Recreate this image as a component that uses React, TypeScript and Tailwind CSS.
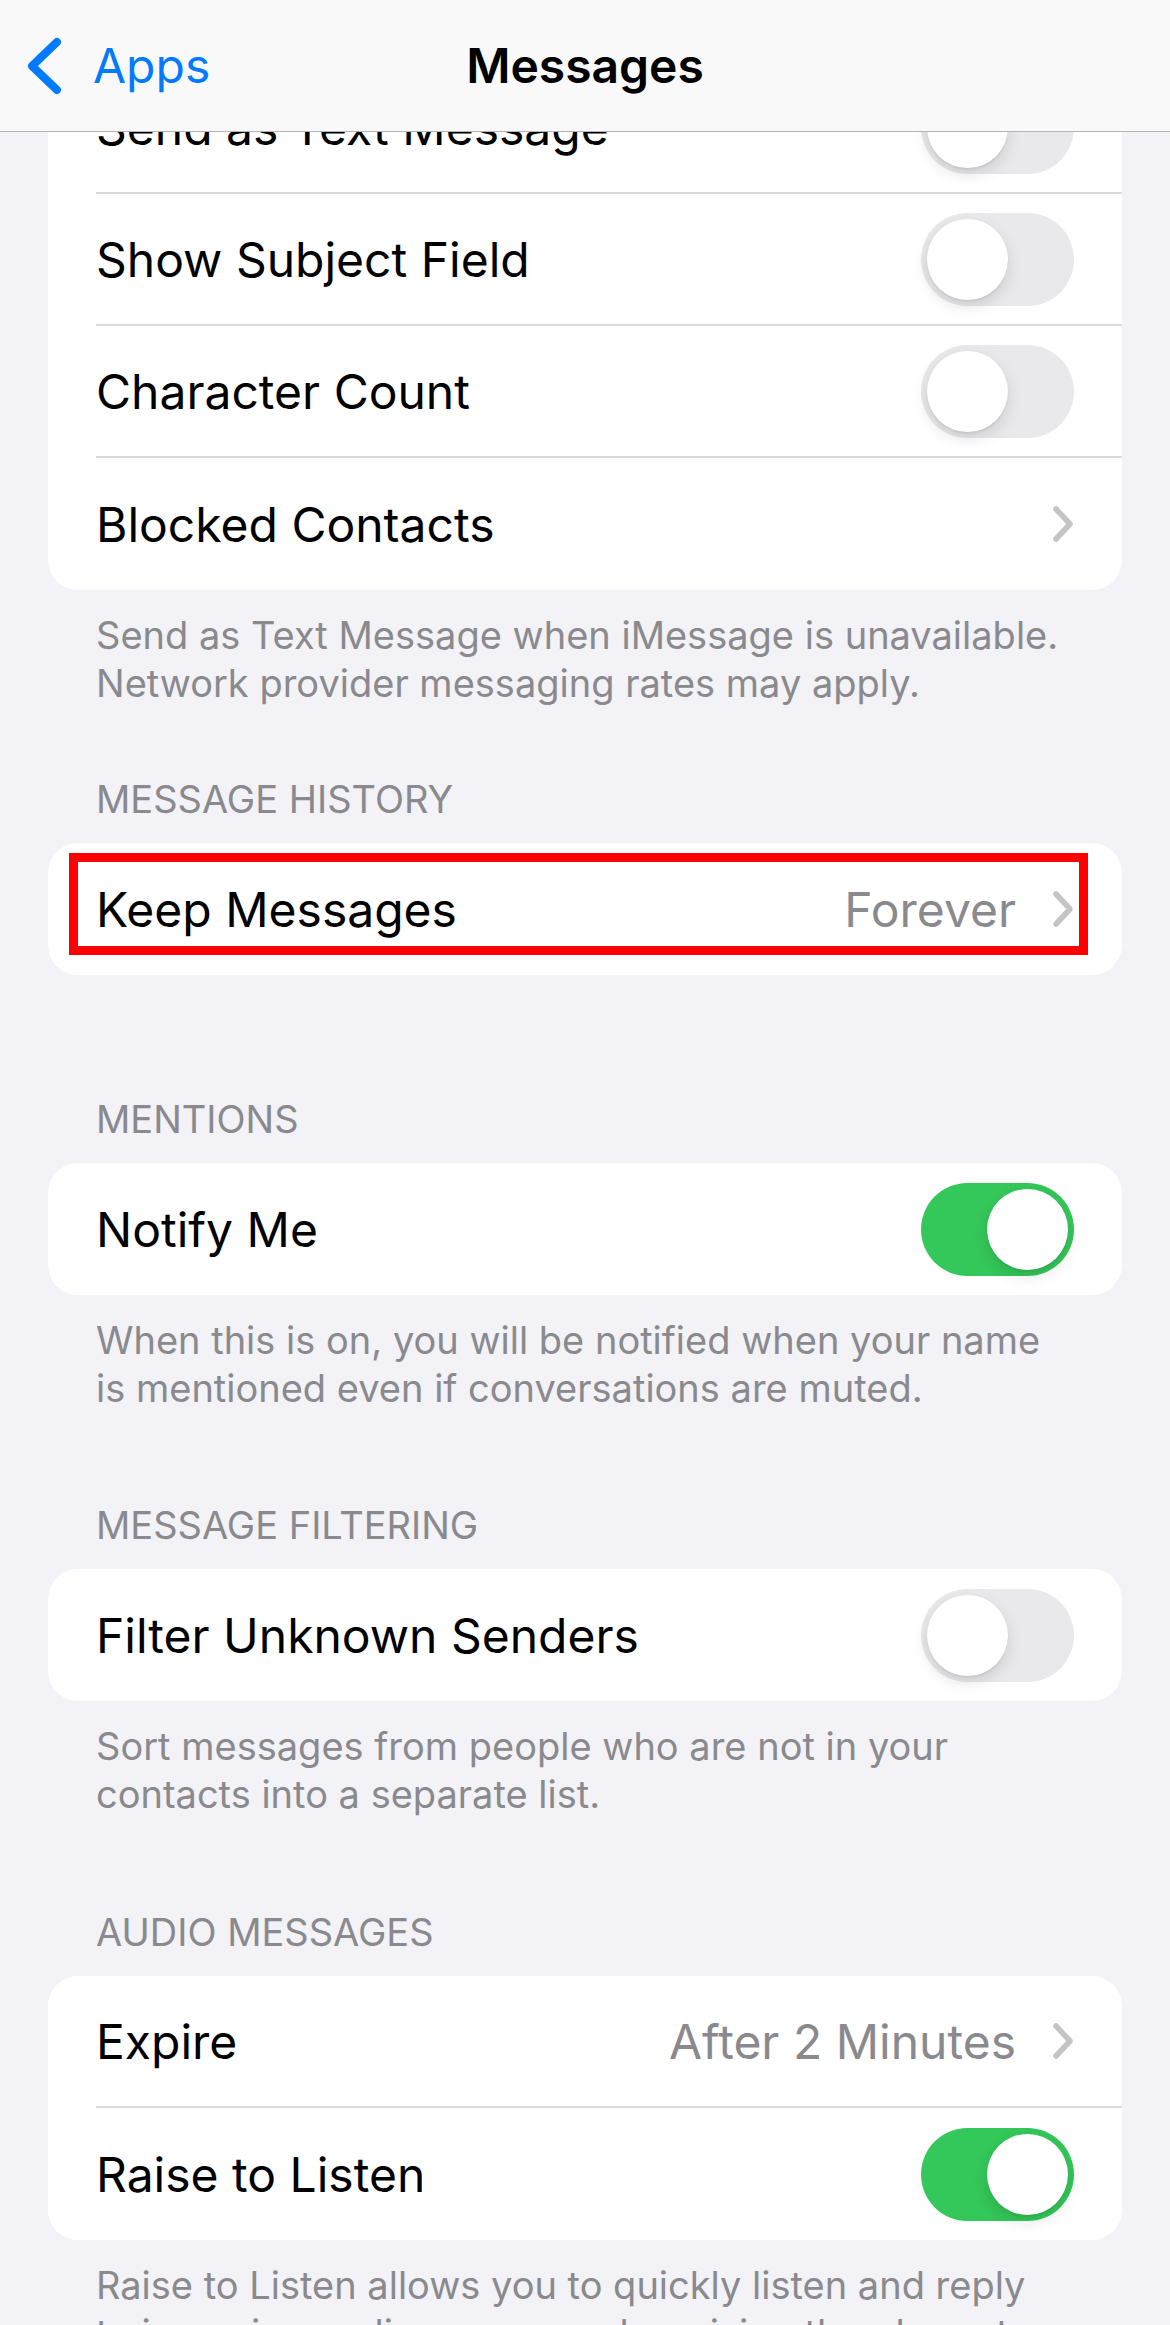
import React from 'react';

type Item = {
  label: string;
  toggle?: boolean;
  value?: string;
  chevron?: boolean;
};

function Toggle({ on }: { on: boolean }) {
  return (
    <div
      className={`flex h-[93px] w-[153px] shrink-0 items-center rounded-full p-[6px] ${
        on ? 'justify-end bg-[#34c759]' : 'justify-start bg-[#e9e9eb]'
      }`}
    >
      <div className="h-[81px] w-[81px] rounded-full bg-white shadow-[0_6px_16px_rgba(0,0,0,0.12),0_2px_2px_rgba(0,0,0,0.06)]" />
    </div>
  );
}

function Chevron() {
  return (
    <svg width="22" height="38" viewBox="0 0 22 38" className="shrink-0">
      <polyline
        points="4,4 18,19 4,34"
        fill="none"
        stroke="#c4c4c7"
        strokeWidth="5.5"
        strokeLinecap="round"
        strokeLinejoin="round"
      />
    </svg>
  );
}

function Row({ item, last }: { item: Item; last: boolean }) {
  return (
    <div className="flex h-[132px] pl-[48px]">
      <div
        className={`flex flex-1 items-center justify-between pr-[48px] ${
          last ? '' : 'border-b-2 border-[#dadade]'
        }`}
      >
        <span className="pt-[2px] text-[48px] leading-none text-black">{item.label}</span>
        {item.toggle !== undefined && <Toggle on={item.toggle} />}
        {item.chevron && (
          <div className="flex items-center gap-[36px]">
            {item.value && (
              <span className="pt-[2px] text-[48px] leading-none text-[#8a8a8e]">{item.value}</span>
            )}
            <Chevron />
          </div>
        )}
      </div>
    </div>
  );
}

function Card({ items, children }: { items: Item[]; children?: React.ReactNode }) {
  return (
    <div className="relative overflow-hidden rounded-[30px] bg-white">
      {items.map((item, i) => (
        <Row key={item.label} item={item} last={i === items.length - 1} />
      ))}
      {children}
    </div>
  );
}

function Header({ title, className }: { title: string; className: string }) {
  return (
    <div className={`mb-[20px] pl-[48px] text-[38px] leading-[48px] text-[#8a8a8e] ${className}`}>{title}</div>
  );
}

function Footer({ lines }: { lines: string[] }) {
  return (
    <div className="pl-[48px] pt-[21px] text-[38px] leading-[48px] text-[#8a8a8e]">
      {lines.map((line) => (
        <div key={line} className="whitespace-nowrap">
          {line}
        </div>
      ))}
    </div>
  );
}

export default function App() {
  return (
    <div className="relative h-[2325px] w-[1170px] overflow-hidden bg-[#f2f2f7] font-['Inter',sans-serif] antialiased">
      {/* scrolled settings list */}
      <div className="px-[48px] pt-[62px]">
        <Card
          items={[
            { label: 'Send as Text Message', toggle: false },
            { label: 'Show Subject Field', toggle: false },
            { label: 'Character Count', toggle: false },
            { label: 'Blocked Contacts', chevron: true },
          ]}
        />
        <Footer
          lines={[
            'Send as Text Message when iMessage is unavailable.',
            'Network provider messaging rates may apply.',
          ]}
        />

        <Header title="MESSAGE HISTORY" className="mt-[68px]" />
        <Card items={[{ label: 'Keep Messages', value: 'Forever', chevron: true }]}>
          {/* highlight around the row */}
          <div className="pointer-events-none absolute left-[21px] top-[10px] h-[102px] w-[1019px] border-[9px] border-[#fe0000]" />
        </Card>

        <Header title="MENTIONS" className="mt-[120px]" />
        <Card items={[{ label: 'Notify Me', toggle: true }]} />
        <Footer
          lines={[
            'When this is on, you will be notified when your name',
            'is mentioned even if conversations are muted.',
          ]}
        />

        <Header title="MESSAGE FILTERING" className="mt-[89px]" />
        <Card items={[{ label: 'Filter Unknown Senders', toggle: false }]} />
        <Footer
          lines={[
            'Sort messages from people who are not in your',
            'contacts into a separate list.',
          ]}
        />

        <Header title="AUDIO MESSAGES" className="mt-[90px]" />
        <Card
          items={[
            { label: 'Expire', value: 'After 2 Minutes', chevron: true },
            { label: 'Raise to Listen', toggle: true },
          ]}
        />
        <Footer
          lines={[
            'Raise to Listen allows you to quickly listen and reply',
            'to incoming audio messages by raising the phone to',
            'your ear.',
          ]}
        />
      </div>

      {/* navigation bar */}
      <div className="absolute inset-x-0 top-0 grid h-[132px] grid-cols-[1fr_auto_1fr] items-center border-b border-[#b4b4b8] bg-[#f9f9f9]">
        <div className="flex items-center">
          <svg width="40" height="64" viewBox="0 0 40 64" className="ml-[24px]">
            <polyline
              points="33,8 8,32 33,56"
              fill="none"
              stroke="#007aff"
              strokeWidth="8"
              strokeLinecap="round"
              strokeLinejoin="round"
            />
          </svg>
          <span className="ml-[29px] text-[48px] leading-none text-[#007aff]">Apps</span>
        </div>
        <span className="text-[48px] font-semibold leading-none text-black">Messages</span>
        <div />
      </div>
    </div>
  );
}
